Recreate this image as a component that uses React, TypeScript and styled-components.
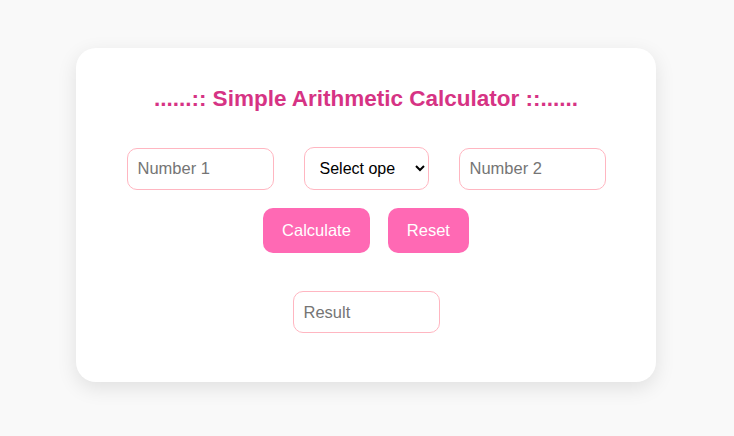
import React from "react";
import styled, { createGlobalStyle } from "styled-components";

const Global = createGlobalStyle`
  html, body { margin: 0; padding: 0; background: #f9f9f9; }
  body { font-family: "Liberation Sans", Arial, sans-serif; }
`;

const Page = styled.div`
  width: 734px;
  height: 436px;
  display: flex;
  justify-content: center;
  padding: 48px 2px 0 0;
  box-sizing: border-box;
`;

const Card = styled.div`
  width: 580px;
  height: 334px;
  box-sizing: border-box;
  background: #fff;
  border-radius: 20px;
  box-shadow: 0 6px 20px rgba(0, 0, 0, 0.1);
  padding-top: 38px;
  display: flex;
  flex-direction: column;
  align-items: center;
`;

const Title = styled.h2`
  margin: 0;
  font-size: 22.5px;
  line-height: 26px;
  font-weight: bold;
  color: #d63384;
  text-align: center;
`;

const Row = styled.div<{ $gap: number; $mt: number }>`
  display: flex;
  align-items: center;
  gap: ${(p) => p.$gap}px;
  margin-top: ${(p) => p.$mt}px;
`;

const Field = styled.input`
  width: 147px;
  height: 42px;
  box-sizing: border-box;
  border: 1px solid #ffb6c1;
  border-radius: 10px;
  padding: 0 10px;
  font-family: "Liberation Sans", Arial, sans-serif;
  font-size: 16.5px;
  color: #000;
  background: #fff;
  outline: none;
  &::placeholder { color: #757575; }
`;

const Select = styled.select`
  width: 125px;
  height: 43px;
  box-sizing: border-box;
  border: 1px solid #ffb6c1;
  border-radius: 10px;
  padding: 0 17px 0 11px;
  font-family: "Liberation Sans", Arial, sans-serif;
  font-size: 16px;
  color: #000;
  background: #fff;
  outline: none;
`;

const Button = styled.button`
  height: 45px;
  box-sizing: border-box;
  border: none;
  border-radius: 10px;
  padding: 0 19px;
  background: #ff69b4;
  color: #fff;
  font-family: "Liberation Sans", Arial, sans-serif;
  font-size: 16.5px;
  cursor: pointer;
`;

export default function App() {
  return (
    <>
      <Global />
      <Page>
        <Card>
          <Title>......:: Simple Arithmetic Calculator ::......</Title>
          <Row $gap={30} $mt={35}>
            <Field placeholder="Number 1" />
            <Select defaultValue="">
              <option value="" disabled>Select operation</option>
              <option value="+">+</option>
              <option value="-">-</option>
              <option value="*">*</option>
              <option value="/">/</option>
            </Select>
            <Field placeholder="Number 2" />
          </Row>
          <Row $gap={18} $mt={18}>
            <Button>Calculate</Button>
            <Button>Reset</Button>
          </Row>
          <Row $gap={0} $mt={38}>
            <Field placeholder="Result" readOnly />
          </Row>
        </Card>
      </Page>
    </>
  );
}
